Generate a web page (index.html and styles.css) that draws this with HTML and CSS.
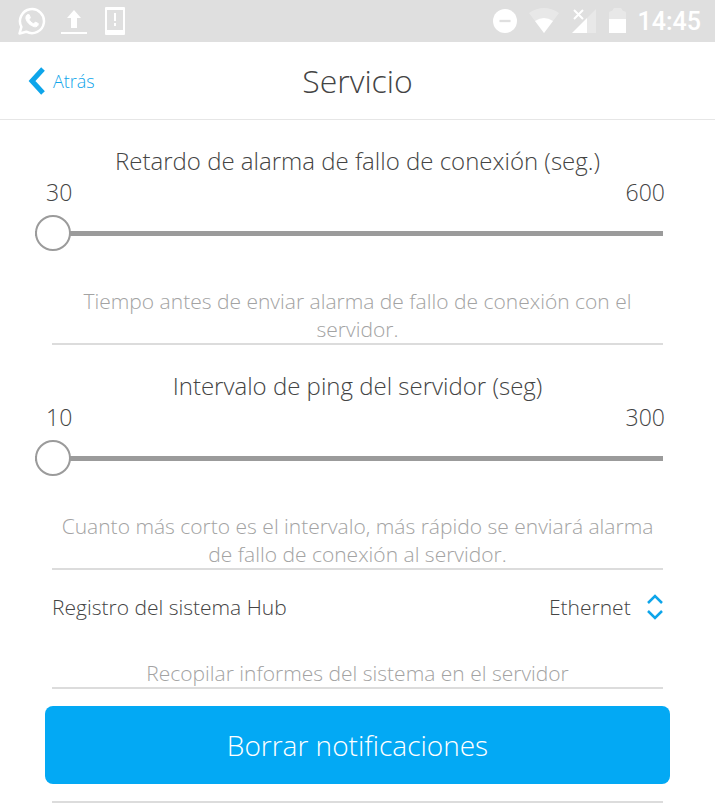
FILE: index.html
```html
<!DOCTYPE html>
<html lang="es">

<head>
  <meta charset="UTF-8">
  <meta name="viewport" content="width=device-width, initial-scale=1.0">
  <title>Servicio</title>
  <link rel="stylesheet" href="styles.css">
</head>

<body>
  <div class="status-bar">
    <div class="status-group">
      <svg width="28" height="28" viewBox="0 0 28 28" fill="none" stroke="#fff">
        <path d="M1.500 26.500l1.900-6.700A12 12 0 1 1 8.300 24.700z" stroke-width="2.500" stroke-linejoin="round"/>
        <path d="M9.600 7.500l1.600.2 1.200 3-1.300 1.800c1 2 2.500 3.400 4.600 4.300l1.700-1.700 2.900 1.400c.2 3-2.300 3.600-4 3.200C12 18.500 9 15.500 8 12c-.5-2 .2-3.600 1.600-4.500z" fill="#fff" stroke-width="1"/>
      </svg>
      <svg width="28" height="28" viewBox="0 0 28 28" fill="#fff">
        <path d="M14 3l7 8h-4v10h-6V11H7z"/>
        <path d="M1 25h26v2H1z"/>
      </svg>
      <svg class="icon-phone" width="20" height="28" viewBox="0 0 20 28" fill="#fff">
        <path fill-rule="evenodd" d="M1 0h18a1 1 0 0 1 1 1v26a1 1 0 0 1-1 1H1a1 1 0 0 1-1-1V1a1 1 0 0 1 1-1zM2 3v20h16V3z"/>
        <path d="M9 6h2v8H9zM9 16h2v3H9z"/>
      </svg>
    </div>
    <div class="status-group status-right">
      <svg width="24" height="24" viewBox="0 0 26 26">
        <circle cx="13" cy="13" r="13" fill="#fff"/>
        <path d="M7 13h12" stroke="#dfdfdf" stroke-width="2.500"/>
      </svg>
      <svg width="30" height="26" viewBox="0 0 30 26" fill="#fff">
        <path d="M0 5Q15-5 30 5L15 25z" fill-opacity=".3"/>
        <path d="M6 13Q15 7 24 13L15 25z"/>
      </svg>
      <svg width="26" height="26" viewBox="0 0 26 26" fill="#fff">
        <path d="M25 1v24H16V10z" fill-opacity=".3"/>
        <path d="M16 10v15H1z"/>
        <path d="M3 2l9 9M12 2l-9 9" fill="none" stroke="#fff" stroke-width="2"/>
      </svg>
      <svg width="17" height="26" viewBox="0 0 17 26" fill="#fff">
        <path d="M0 11V5q0-2 3-2l2-3h7l2 3q3 0 3 2v6z" fill-opacity=".3"/>
        <path d="M0 11h17v14H0z"/>
      </svg>
      <span class="clock">14:45</span>
    </div>
  </div>

  <header class="header">
    <a class="back" href="#">
      <svg width="17" height="28" viewBox="0 0 17 28" fill="none" stroke="#0ea5ea" stroke-width="5">
        <path d="M15 2L4 14l11 12"/>
      </svg>
      Atrás
    </a>
    <h1>Servicio</h1>
  </header>

  <main class="settings">
    <section class="setting">
      <label class="setting-title" for="alarmDelay">Retardo de alarma de fallo de conexión (seg.)</label>
      <div class="range-values"><span>30</span><span>600</span></div>
      <input class="range" type="range" id="alarmDelay" min="30" max="600" value="30">
      <p class="hint">Tiempo antes de enviar alarma de fallo de conexión con el servidor.</p>
    </section>

    <section class="setting">
      <label class="setting-title" for="pingInterval">Intervalo de ping del servidor (seg)</label>
      <div class="range-values"><span>10</span><span>300</span></div>
      <input class="range" type="range" id="pingInterval" min="10" max="300" value="10">
      <p class="hint">Cuanto más corto es el intervalo, más rápido se enviará alarma de fallo de conexión al servidor.</p>
    </section>

    <section class="setting">
      <div class="select-row">
        <label for="hubLog">Registro del sistema Hub</label>
        <div class="select-box">
          <select id="hubLog">
            <option>Ethernet</option>
          </select>
          <svg width="16" height="26" viewBox="0 0 16 26" fill="none" stroke="#0ea5ea" stroke-width="2.500">
            <path d="M1 9l7-7 7 7M1 17l7 7 7-7"/>
          </svg>
        </div>
      </div>
      <p class="hint">Recopilar informes del sistema en el servidor</p>
    </section>

    <section class="setting setting-action">
      <button class="clear-btn" type="button">Borrar notificaciones</button>
    </section>
  </main>
</body>

</html>
```

FILE: styles.css
```css
* {
  box-sizing: border-box;
}

body {
  margin: 0;
  background-color: #fff;
  color: #444;
  font-family: 'Open Sans', sans-serif;
  font-weight: 300;
}

.status-bar {
  display: flex;
  justify-content: space-between;
  align-items: center;
  height: 42px;
  padding: 0 14px 0 18px;
  background-color: #dfdfdf;
}

.status-group {
  display: flex;
  align-items: center;
  gap: 14px;
}

.icon-phone {
  margin-left: 3px;
}

.status-right {
  gap: 12px;
}

.clock {
  color: #fff;
  font-family: Roboto, sans-serif;
  font-size: 25px;
  font-weight: 500;
}

.header {
  display: grid;
  grid-template-columns: 1fr auto 1fr;
  align-items: center;
  height: 78px;
  padding: 0 28px;
  border-bottom: 1px solid #e6e6e6;
}

.header h1 {
  margin: 0;
  font-size: 32px;
  line-height: 42px;
  font-weight: 300;
}

.back {
  display: flex;
  align-items: center;
  gap: 8px;
  color: #0ea5ea;
  font-size: 18px;
  text-decoration: none;
}

.settings {
  padding: 0 52px;
}

.setting {
  display: flex;
  flex-direction: column;
  padding-top: 24px;
  border-bottom: 2px solid #dcdcdc;
}

.setting-title {
  font-size: 24px;
  line-height: 34px;
  text-align: center;
}

.range-values {
  display: flex;
  justify-content: space-between;
  margin: 0 -2px 0 -6px;
  font-size: 23px;
  line-height: 28px;
}

.range {
  -webkit-appearance: none;
  appearance: none;
  height: 36px;
  margin: 9px 0 36px -17px;
  border-radius: 3px;
  background: linear-gradient(#9b9b9b, #9b9b9b) center / 100% 5px no-repeat;
}

.range::-webkit-slider-thumb {
  -webkit-appearance: none;
  width: 36px;
  height: 36px;
  border: 2px solid #9b9b9b;
  border-radius: 50%;
  background-color: #fff;
}

.hint {
  margin: 0;
  color: #a3a3a3;
  font-size: 21px;
  line-height: 28px;
  text-align: center;
}

.select-row {
  display: flex;
  justify-content: space-between;
  align-items: center;
  margin-bottom: 39px;
  font-size: 21px;
  line-height: 26px;
}

.select-box {
  display: flex;
  align-items: center;
  gap: 16px;
}

.select-box select {
  appearance: none;
  padding: 0;
  border: none;
  background: none;
  color: inherit;
  font: inherit;
}

.setting-action {
  padding: 17px 0;
}

.clear-btn {
  height: 78px;
  margin: 0 -7px;
  border: none;
  border-radius: 8px;
  background-color: #03a9f4;
  color: #fff;
  font-family: inherit;
  font-size: 28px;
  font-weight: 300;
  cursor: pointer;
}
```
